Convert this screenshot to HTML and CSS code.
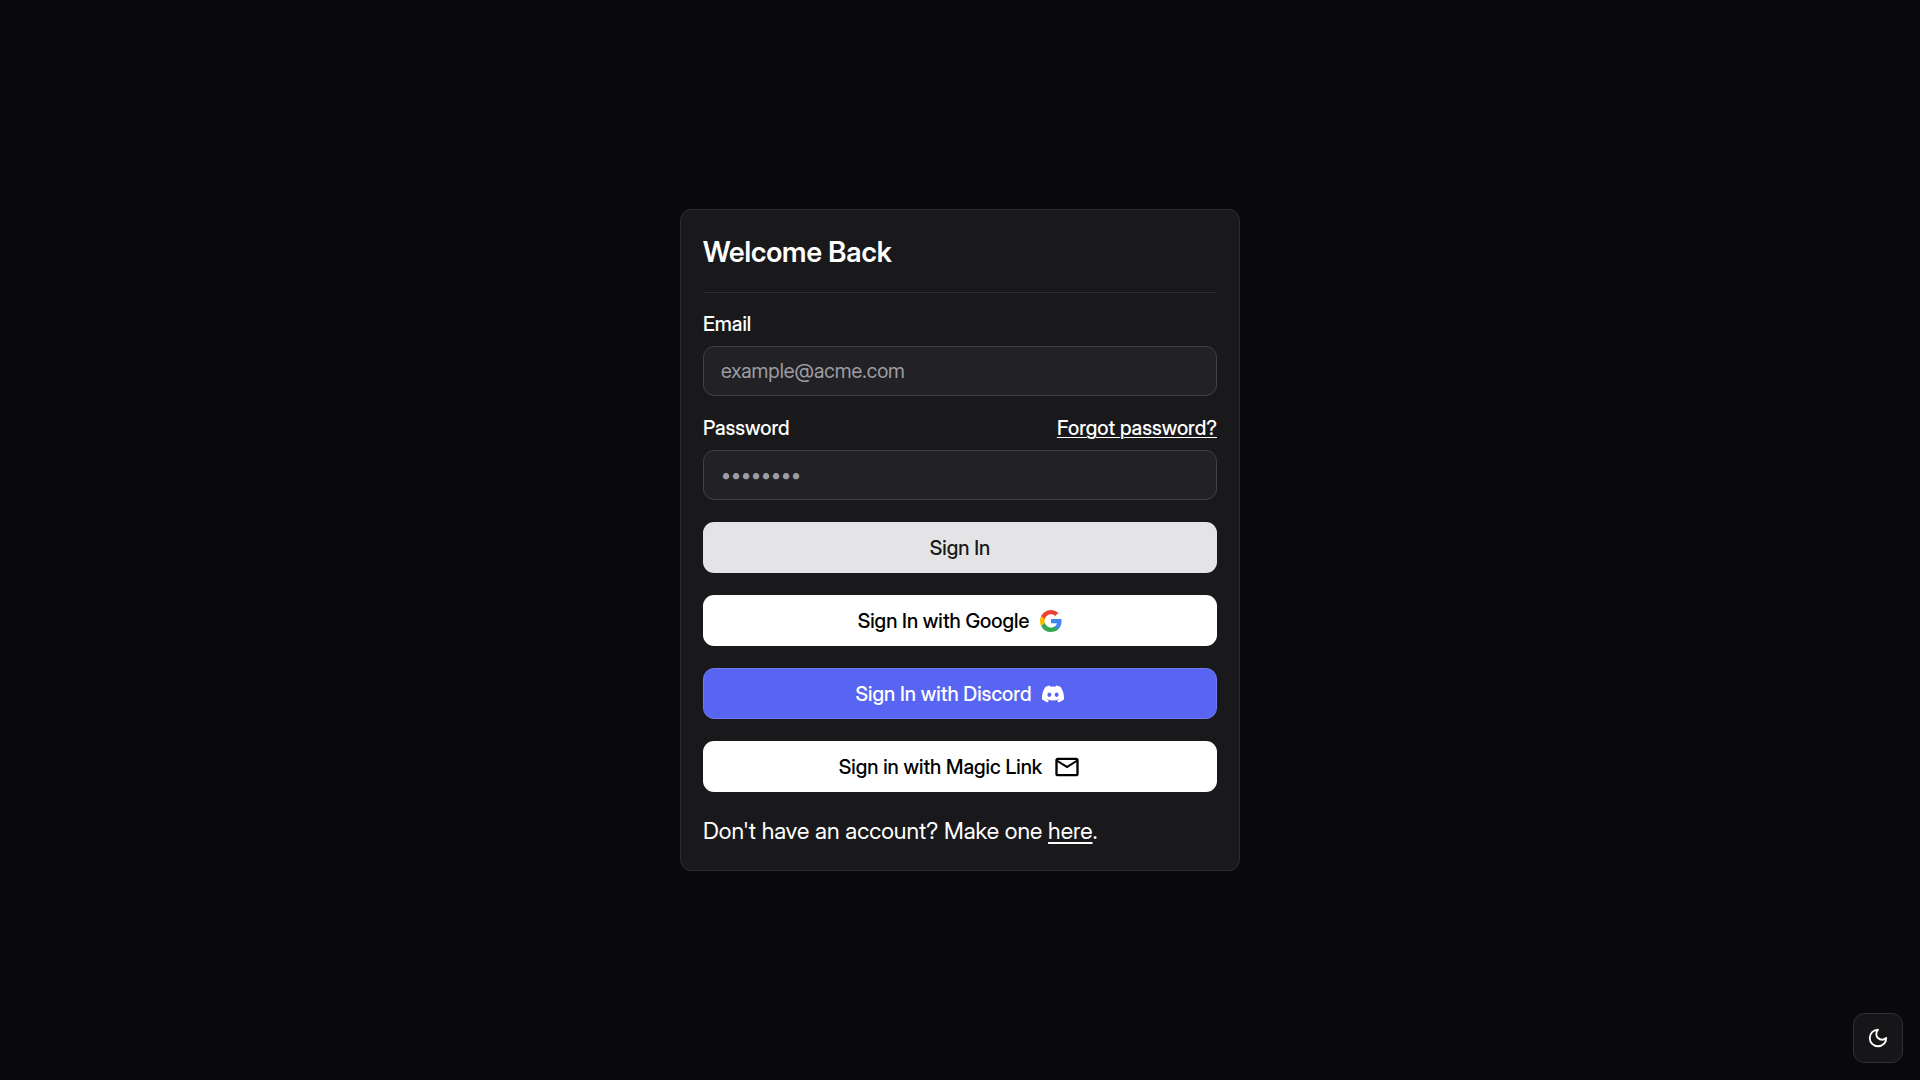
FILE: index.html
```html
<!DOCTYPE html>
<html lang="en">
<head>
<meta charset="utf-8">
<meta name="viewport" content="width=device-width, initial-scale=1">
<title>Sign In</title>
<link rel="stylesheet" href="styles.css">
</head>
<body>
<main class="page">
  <section class="card">
    <h1 class="title">Welcome Back</h1>
    <form class="form">
      <div class="fields">
        <div class="field">
          <div class="label-row"><label for="email">Email</label></div>
          <input class="input" id="email" type="email" placeholder="example@acme.com">
        </div>
        <div class="field">
          <div class="label-row"><label for="password">Password</label><a href="#">Forgot password?</a></div>
          <input class="input" id="password" type="password" placeholder="••••••••">
        </div>
      </div>
      <button class="button button-primary" type="submit">Sign In</button>
      <button class="button button-white" type="button">Sign In with Google
        <svg class="icon" viewBox="0 0 24 24" aria-hidden="true"><path fill="#4285F4" d="M23.5 12.27c0-.85-.08-1.67-.22-2.45H12v4.64h6.45a5.52 5.52 0 0 1-2.39 3.62v3h3.86c2.27-2.09 3.58-5.16 3.58-8.81z"/><path fill="#34A853" d="M12 24c3.24 0 5.95-1.07 7.93-2.91l-3.87-3c-1.07.72-2.45 1.14-4.06 1.14-3.12 0-5.77-2.11-6.71-4.95H1.29v3.1A12 12 0 0 0 12 24z"/><path fill="#FBBC05" d="M5.29 14.28a7.2 7.2 0 0 1 0-4.56v-3.1h-4a12 12 0 0 0 0 10.76z"/><path fill="#EA4335" d="M12 4.77c1.76 0 3.34.61 4.59 1.8l3.43-3.43A11.97 11.97 0 0 0 1.29 6.62l4 3.1C6.23 6.88 8.88 4.77 12 4.77z"/></svg>
      </button>
      <button class="button button-discord" type="button">Sign In with Discord
        <svg class="icon" viewBox="0 0 24 24" aria-hidden="true"><path fill="currentColor" d="M20.317 4.37a19.79 19.79 0 0 0-4.885-1.515.074.074 0 0 0-.079.037c-.21.375-.444.864-.608 1.25a18.27 18.27 0 0 0-5.487 0 12.64 12.64 0 0 0-.617-1.25.077.077 0 0 0-.079-.037A19.736 19.736 0 0 0 3.677 4.37a.07.07 0 0 0-.032.027C.533 9.046-.32 13.58.099 18.057a.082.082 0 0 0 .031.057 19.9 19.9 0 0 0 5.993 3.03.078.078 0 0 0 .084-.028c.462-.63.874-1.295 1.226-1.994a.076.076 0 0 0-.041-.106 13.107 13.107 0 0 1-1.872-.892.077.077 0 0 1-.008-.128c.126-.094.252-.192.372-.292a.074.074 0 0 1 .077-.01c3.928 1.793 8.18 1.793 12.062 0a.074.074 0 0 1 .078.01c.12.098.246.198.373.292a.077.077 0 0 1-.006.127 12.3 12.3 0 0 1-1.873.892.077.077 0 0 0-.041.107c.36.698.772 1.362 1.225 1.993a.076.076 0 0 0 .084.028 19.839 19.839 0 0 0 6.002-3.03.077.077 0 0 0 .032-.054c.5-5.177-.838-9.674-3.549-13.66a.061.061 0 0 0-.031-.03zM8.02 15.33c-1.183 0-2.157-1.085-2.157-2.419 0-1.333.956-2.419 2.157-2.419 1.21 0 2.176 1.096 2.157 2.42 0 1.333-.956 2.418-2.157 2.418zm7.975 0c-1.183 0-2.157-1.085-2.157-2.419 0-1.333.955-2.419 2.157-2.419 1.21 0 2.176 1.096 2.157 2.42 0 1.333-.946 2.418-2.157 2.418z"/></svg>
      </button>
      <button class="button button-white" type="button">Sign in with Magic Link
        <svg class="icon-mail" viewBox="0 0 24 24" aria-hidden="true"><path fill="currentColor" d="M22 6c0-1.100-.9-2-2-2H4c-1.100 0-2 .9-2 2v12c0 1.100.9 2 2 2h16c1.100 0 2-.9 2-2V6zm-2 0l-8 5-8-5h16zm0 12H4V8l8 5 8-5v10z"/></svg>
      </button>
    </form>
    <p class="signup">Don't have an account? Make one <a href="#">here</a>.</p>
  </section>
</main>
<button class="theme-toggle" type="button" aria-label="Toggle theme">
  <svg class="icon" viewBox="0 0 24 24" aria-hidden="true"><path fill="none" stroke="currentColor" stroke-width="2" stroke-linecap="round" stroke-linejoin="round" d="M12 3a6 6 0 0 0 9 9 9 9 0 1 1-9-9Z"/></svg>
</button>
</body>
</html>
```
FILE: styles.css
```css
* { box-sizing: border-box; }
body {
  margin: 0;
  background: #09090b;
  color: #fff;
  font-family: "Inter Display", Inter, "Liberation Sans", sans-serif;
  font-size: 20px;
  line-height: 28px;
}
a {
  color: inherit;
  text-decoration-thickness: 1px;
  text-underline-offset: 2px;
}
.page {
  min-height: 100vh;
  padding: 24px;
  display: flex;
  align-items: center;
  justify-content: center;
}
.card {
  width: 100%;
  max-width: 560px;
  padding: 22px;
  background: #19191b;
  border: 1px solid #2c2c2e;
  border-radius: 11px;
}
.title {
  margin: 0 0 17px;
  padding-bottom: 20px;
  border-bottom: 1px solid #2f2f31;
  font-size: 28px;
  line-height: 40px;
  font-weight: 600;
}
.form { display: flex; flex-direction: column; gap: 22px; }
.fields { display: flex; flex-direction: column; gap: 18px; }
.field { display: flex; flex-direction: column; gap: 8px; }
.label-row { display: flex; justify-content: space-between; font-weight: 500; }
.input {
  width: 100%;
  height: 50px;
  padding: 0 17px;
  background: #222224;
  border: 1px solid #414144;
  border-radius: 11px;
  color: #fff;
  font: inherit;
}
.input::placeholder { color: #9c9ca6; opacity: 1; }
.button {
  height: 51px;
  display: flex;
  align-items: center;
  justify-content: center;
  gap: 11px;
  border: 0;
  border-radius: 11px;
  font: inherit;
  font-weight: 500;
}
.button-primary { background: #e4e4e6; color: #19191b; }
.button-white { background: #fff; color: #000; }
.button-discord { background: #5865f2; color: #fff; border: 1px solid #6f7af4; }
.icon { width: 22px; height: 22px; }
.icon-mail { width: 28px; height: 28px; }
.signup { margin: 22px 0 0; font-size: 23px; line-height: 34px; }
.signup a { text-decoration-thickness: 2px; text-underline-offset: 3px; }
.theme-toggle {
  position: fixed;
  right: 17px;
  bottom: 17px;
  width: 50px;
  height: 50px;
  display: flex;
  align-items: center;
  justify-content: center;
  padding: 0;
  background: #161618;
  border: 1px solid #303033;
  border-radius: 11px;
  color: #fff;
}
```
